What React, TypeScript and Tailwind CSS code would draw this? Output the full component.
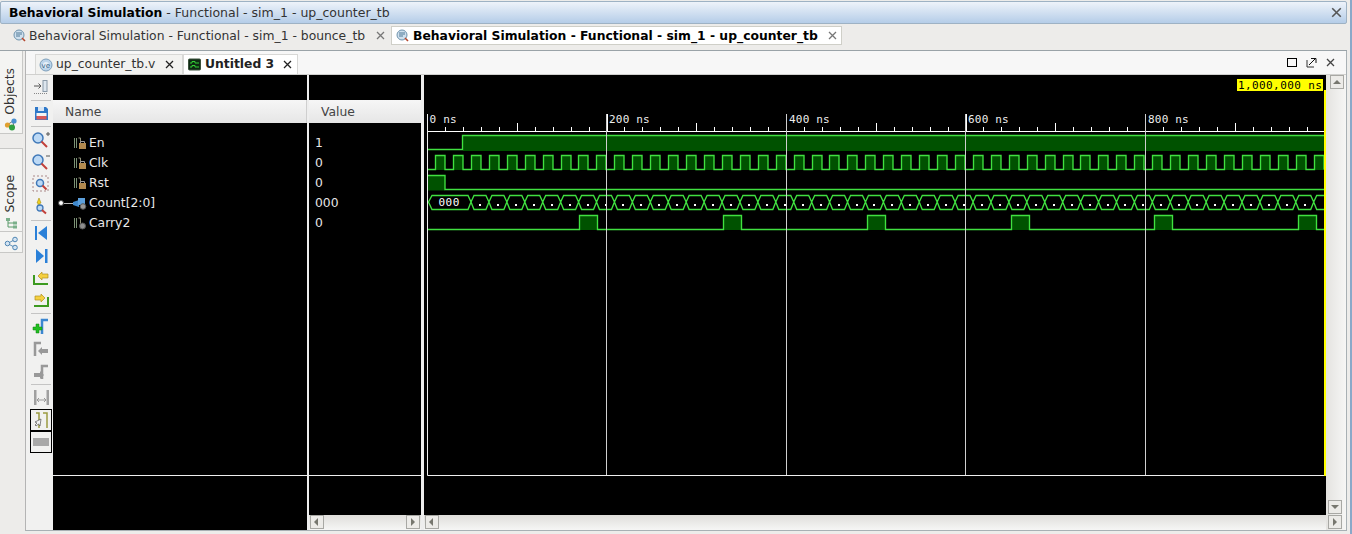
import React from "react";

const G = "#40e040";
const F = "#005200";
const W = 1.35;

function X({ c = "#444", s = 9 }: { c?: string; s?: number }) {
  return (
    <svg width={s} height={s} viewBox="0 0 9 9" className="shrink-0">
      <path d="M1 1L8 8M8 1L1 8" stroke={c} strokeWidth="1.3" fill="none" />
    </svg>
  );
}

function SimIcon() {
  return (
    <svg width="13" height="13" viewBox="0 0 13 13" className="shrink-0">
      <circle cx="6" cy="6" r="5" fill="#cfe0ee" stroke="#6f93ad" />
      <path d="M4 3v5M6 3v5M8 3v3" stroke="#4e7896" strokeWidth="1" />
      <path d="M9 9l3 3" stroke="#b5472f" strokeWidth="1.6" />
    </svg>
  );
}

function Lens({ children, cx = 7, cy = 7 }: { children?: React.ReactNode; cx?: number; cy?: number }) {
  return (
    <svg width="20" height="18" viewBox="0 0 20 18">
      {children}
      <circle cx={cx} cy={cy} r="5" fill="#bcd9f5" stroke="#3f78b8" strokeWidth="1.5" />
      <path d={`M${cx + 3.5} ${cy + 3.5}l5.500 5.500`} stroke="#c2403a" strokeWidth="2" />
    </svg>
  );
}

function ToolSep() {
  return <div className="h-px w-[20px] shrink-0 bg-[#c4c4c4] mx-auto" />;
}

function Tool({ children, h = 22, boxed }: { children: React.ReactNode; h?: number; boxed?: boolean }) {
  return (
    <div
      style={{ height: h }}
      className={`w-[22px] shrink-0 flex items-center justify-center ${boxed ? "border border-black" : ""}`}
    >
      {children}
    </div>
  );
}

function Toolbar() {
  return (
    <div className="w-[27px] shrink-0 flex flex-col items-start pl-[4px] pr-[1px]">
      <Tool h={24}>
        <svg width="16" height="16" viewBox="0 0 16 16">
          <path d="M1 7h7M5.500 4.500L8 7l-2.500 2.500" stroke="#555" strokeWidth="1" fill="none" />
          <rect x="10" y="1.500" width="4" height="11" fill="#dde6ee" stroke="#8a9aa8" />
          <path d="M1 14.500h13" stroke="#888" strokeDasharray="1 1" />
        </svg>
      </Tool>
      <div className="h-[1px]" />
      <ToolSep />
      <Tool h={25}>
        <svg width="15" height="15" viewBox="0 0 15 15">
          <path d="M1 1h11l2 2v11H1z" fill="#2f78c8" />
          <rect x="4" y="1" width="6" height="4" fill="#d8e6f4" />
          <rect x="2.500" y="7" width="10" height="3" fill="#f4f4f4" />
          <rect x="2.500" y="10" width="10" height="3.500" fill="#d85a5a" />
        </svg>
      </Tool>
      <ToolSep />
      <div className="h-[2px]" />
      <Tool>
        <Lens>
          <path d="M15 3h4M17 1v4" stroke="#555" strokeWidth="1" />
        </Lens>
      </Tool>
      <Tool>
        <Lens>
          <path d="M15 3h4" stroke="#555" strokeWidth="1" />
        </Lens>
      </Tool>
      <Tool>
        <svg width="18" height="18" viewBox="0 0 18 18">
          <rect x="1" y="1" width="15" height="15" fill="none" stroke="#a88" strokeDasharray="2 2" />
          <circle cx="8" cy="8" r="3.500" fill="#bcd9f5" stroke="#3f78b8" strokeWidth="1.500" />
          <path d="M10.500 10.500l4 4" stroke="#c2403a" strokeWidth="2" />
        </svg>
      </Tool>
      <Tool>
        <svg width="18" height="18" viewBox="0 0 18 18">
          <path d="M7 1l2 5H8v5H6V6H5z" fill="#f0d020" stroke="#a89010" strokeWidth=".6" />
          <circle cx="8" cy="11" r="3" fill="#bcd9f5" stroke="#3f78b8" strokeWidth="1.300" />
          <path d="M10 13l4 3.500" stroke="#c2403a" strokeWidth="2" />
        </svg>
      </Tool>
      <div className="h-[3px]" />
      <ToolSep />
      <Tool h={24}>
        <svg width="14" height="16" viewBox="0 0 14 16">
          <rect x="1" y="1" width="2" height="14" fill="#2a80d8" />
          <path d="M13 1v14L4 8z" fill="#2a80d8" />
        </svg>
      </Tool>
      <Tool h={22}>
        <svg width="14" height="16" viewBox="0 0 14 16">
          <rect x="11" y="1" width="2.500" height="14" fill="#2a80d8" />
          <path d="M2 1v14l8-7z" fill="#2a80d8" />
        </svg>
      </Tool>
      <Tool h={23}>
        <svg width="18" height="16" viewBox="0 0 18 16">
          <path d="M2 4v9h14" stroke="#3c9a20" strokeWidth="2" fill="none" />
          <path d="M6 5l4-4v2h6v4h-6v2z" fill="#f5d040" stroke="#b09020" strokeWidth=".7" />
        </svg>
      </Tool>
      <Tool h={22}>
        <svg width="18" height="16" viewBox="0 0 18 16">
          <path d="M16 4v9H2" stroke="#3c9a20" strokeWidth="2" fill="none" />
          <path d="M13 5L9 1v2H3v4h6v2z" fill="#f5d040" stroke="#b09020" strokeWidth=".7" />
        </svg>
      </Tool>
      <div className="h-[1px]" />
      <ToolSep />
      <Tool h={24}>
        <svg width="18" height="17" viewBox="0 0 18 17">
          <path d="M10 16V2h6" stroke="#3b86d0" strokeWidth="2.500" fill="none" />
          <path d="M4 6h3v3h3v3H7v3H4v-3H1V9h3z" fill="#20c020" stroke="#108010" strokeWidth=".5" />
        </svg>
      </Tool>
      <Tool h={22}>
        <svg width="16" height="16" viewBox="0 0 16 16">
          <path d="M2 15V2h6" stroke="#999" strokeWidth="2.500" fill="none" />
          <path d="M5 10l4-4v2h6v4H9v2z" fill="#999" />
        </svg>
      </Tool>
      <Tool h={24}>
        <svg width="16" height="16" viewBox="0 0 16 16">
          <path d="M9 15V2h6" stroke="#999" strokeWidth="2.500" fill="none" />
          <path d="M11 11L7 7v2H1v4h6v2z" fill="#999" />
        </svg>
      </Tool>
      <ToolSep />
      <Tool h={24}>
        <svg width="17" height="17" viewBox="0 0 17 17">
          <rect x="1" y="1" width="2.500" height="15" fill="#a0a0a0" />
          <rect x="13.500" y="1" width="2.500" height="15" fill="#a0a0a0" />
          <path d="M4 11h9M6 9l-2 2 2 2M11 9l2 2-2 2" stroke="#999" fill="none" />
        </svg>
      </Tool>
      <Tool h={22} boxed>
        <svg width="17" height="17" viewBox="0 0 17 17">
          <path d="M3 1h3v15M10 1h4v15" stroke="#9a9a40" strokeWidth="1.500" fill="none" />
          <path d="M8 7l-1 7-1.500-2L3 14l-1-1 2-2-2-1z" fill="#f4f4f4" stroke="#555" strokeWidth=".7" />
        </svg>
      </Tool>
      <Tool h={22} boxed>
        <div className="w-[16px] h-[8px] bg-[#a8a8a8]" />
      </Tool>
    </div>
  );
}

function SignalIcon({ kind }: { kind: "lock" | "gear" | "bus" }) {
  if (kind === "bus")
    return (
      <svg width="14" height="13" viewBox="0 0 14 13">
        <path d="M0 5l6-2v7l-6-2z" fill="#3f88cc" />
        <rect x="5" y="1" width="7" height="7" fill="#5c9fdc" />
        <circle cx="10" cy="9.500" r="2.800" fill="#999" stroke="#555" />
      </svg>
    );
  return (
    <svg width="14" height="13" viewBox="0 0 14 13">
      <path d="M1.500 1v10M3.500 1v10" stroke="#7d9276" strokeWidth="1" />
      <path d="M5.500 1h2v10" stroke="#94947a" strokeWidth="1" fill="none" />
      {kind === "lock" ? (
        <>
          <rect x="6" y="6" width="7" height="6" fill="#b28a50" />
          <path d="M7.500 6V4.500h4V6" stroke="#999" fill="none" />
        </>
      ) : (
        <circle cx="9.500" cy="9" r="3" fill="#8d8d8d" stroke="#555" />
      )}
    </svg>
  );
}

const signals: { name: string; value: string; kind: "lock" | "gear" | "bus" }[] = [
  { name: "En", value: "1", kind: "lock" },
  { name: "Clk", value: "0", kind: "lock" },
  { name: "Rst", value: "0", kind: "lock" },
  { name: "Count[2:0]", value: "000", kind: "bus" },
  { name: "Carry2", value: "0", kind: "gear" },
];

function ScrollBtn({ dir }: { dir: "l" | "r" | "u" | "d" }) {
  const d = { l: "M7 2v8L3 6z", r: "M4 2v8l4-4z", u: "M2 8h8L6 4z", d: "M2 4h8L6 8z" }[dir];
  return (
    <div className="w-[14px] h-[14px] shrink-0 border border-[#a8a8a4] bg-[#ecebe8] flex items-center justify-center">
      <svg width="12" height="12" viewBox="0 0 12 12">
        <path d={d} fill="#77776f" />
      </svg>
    </div>
  );
}

function HScroll({ right = true }: { right?: boolean }) {
  return (
    <div className="h-[15px] shrink-0 flex justify-between items-start bg-gradient-to-b from-[#dfdedb] to-[#f6f6f5] px-[1px]">
      <ScrollBtn dir="l" />
      {right && <ScrollBtn dir="r" />}
    </div>
  );
}

function Waves() {
  const gx = [606.5, 786.5, 965.5, 1145.5];
  const step = 17.93;
  let clk = "M428 169.500";
  const clkFill: React.ReactNode[] = [];
  for (let i = 0; i < 50; i++) {
    const r = Math.round(435 + i * step) + 0.5;
    const f = r + 9.5;
    if (r > 1325) break;
    const fe = Math.min(f, 1325.5);
    clk += `H${r}V155.500H${fe}` + (f < 1325 ? `V169.500` : "");
    clkFill.push(<rect key={i} x={r} y={155.5} width={fe - r} height={14.5} fill={F} />);
  }
  const dots: React.ReactNode[] = [];
  const hex: string[] = ["M471 202L468 195.500H432L428.500 202L432 209.500H468L471 202"];
  for (let i = 0; i < 48; i++) {
    const a = 471 + i * step;
    const b = a + step;
    if (a > 1325) break;
    const e = Math.min(b, 1325);
    const t = Math.min(b - 3, 1325);
    hex.push(`M${a} 202L${a + 3} 195.500H${t}L${e} 202L${t} 209.500H${a + 3}Z`);
    if (a + 9 < 1322) dots.push(<rect key={i} x={Math.round(a + 8)} y={204} width={2} height={2} fill="#fff" />);
  }
  const pulses = [579.5, 723.5, 867.5, 1011.5, 1154.5, 1298.5];
  let carry = "M428 229.500";
  pulses.forEach((p) => {
    carry += `H${p}V215.500H${p + 18}V229.500`;
  });
  carry += "H1325";

  const ticks: React.ReactNode[] = [];
  for (let i = 0; i <= 50; i++) {
    const x = Math.round(427 + i * 17.95) + 0.5;
    if (x > 1325) break;
    const y1 = i % 10 === 0 ? 114 : i % 5 === 0 ? 123 : 127;
    ticks.push(<path key={i} d={`M${x} ${y1}V131`} stroke="#fff" strokeWidth="1" />);
  }
  const labels = ["0 ns", "200 ns", "400 ns", "600 ns", "800 ns"];
  const mono = { fontFamily: "'DejaVu Sans Mono', monospace", fontSize: 11 };
  return (
    <svg width="902" height="440" viewBox="424 75 902 440" className="block">
      <rect x="424" y="75" width="902" height="440" fill="#000" />
      {labels.map((l, i) => (
        <text key={l} x={[429.5, 609, 789, 968, 1148][i]} y={123} fill="#eee" style={mono} letterSpacing="0.2">
          {l}
        </text>
      ))}
      {ticks}
      <path d="M427.500 131.500H1325" stroke="#fff" />
      <rect x="463" y="135.500" width="863" height="15.500" fill={F} />
      <path d="M428 149.500H462.500V135.500H1325" stroke={G} strokeWidth={W} fill="none" />
      {clkFill}
      <path d={clk} stroke={G} strokeWidth={W} fill="none" />
      <rect x="428" y="175.500" width="17" height="15" fill={F} />
      <path d="M428 175.500H445V189.500H1325" stroke={G} strokeWidth={W} fill="none" />
      <path d={hex.join("")} stroke={G} strokeWidth={W} fill="none" />
      <text x="438.500" y="206" fill="#fff" style={mono} letterSpacing="0.5">
        000
      </text>
      {dots}
      {pulses.map((p) => (
        <rect key={p} x={p} y={215.5} width={18} height={14.5} fill={F} />
      ))}
      <path d={carry} stroke={G} strokeWidth={W} fill="none" />
      {gx.map((x) => (
        <path key={x} d={`M${x} 114V475`} stroke="#cfcfcf" />
      ))}
      <path d="M427.500 114V475.500H1325" stroke="#eee" fill="none" />
      <rect x="1237" y="79" width="86" height="12" fill="#ffff00" />
      <text x="1238" y="89" fill="#000" style={mono} letterSpacing="0.4">
        1,000,000 ns
      </text>
      <rect x="1324" y="90" width="2" height="386" fill="#ffff00" />
    </svg>
  );
}

export default function App() {
  return (
    <div
      className="w-[1352px] h-[534px] overflow-hidden flex flex-col bg-[#edecea] text-[12.35px] text-[#333] border-r-2 border-[#8aa8c8]"
      style={{ fontFamily: "'DejaVu Sans', sans-serif" }}
    >
      {/* title bar */}
      <div className="h-[23px] mt-[1px] mr-[3px] shrink-0 flex items-center justify-between pl-[8px] pr-[4px] border border-[#9eb2c4] rounded-[2px] bg-gradient-to-b from-[#eef3fa] to-[#b5cde8]">
        <div className="whitespace-nowrap pt-[1px]">
          <span className="font-bold text-black">Behavioral Simulation</span>
          <span className="text-[#333] text-[12.5px]"> - Functional - sim_1 - up_counter_tb</span>
        </div>
        <X c="#555" s={11} />
      </div>
      {/* sim tabs */}
      <div className="h-[27px] shrink-0 mr-[3px] flex items-start pt-[2px] pl-[13px] border-b border-[#9aa3a8]">
        <div className="h-[19px] flex items-center gap-[3px] w-[378px] whitespace-nowrap text-[#333]">
          <SimIcon />
          <span className="pt-[1px]">Behavioral Simulation - Functional - sim_1 - bounce_tb</span>
          <span className="ml-[8px]">
            <X c="#777" />
          </span>
        </div>
        <div className="h-[19px] flex items-center gap-[4px] pl-[4px] pr-[4px] bg-white border border-[#cfcfc8] whitespace-nowrap font-bold text-black">
          <SimIcon />
          <span className="pt-[1px]">Behavioral Simulation - Functional - sim_1 - up_counter_tb</span>
          <span className="ml-[6px]">
            <X c="#777" />
          </span>
        </div>
      </div>
      {/* main */}
      <div className="flex-1 flex min-h-0 mb-[3px]">
        {/* side tabs */}
        <div className="w-[24px] shrink-0 flex flex-col items-start">
          <div className="h-[83px] w-[23px] flex flex-col items-center bg-[#f4f4f2] border border-l-0 border-t-0 border-[#c8c8c6]">
            <span className="[writing-mode:vertical-rl] rotate-180 mt-[17px] mr-[3px] leading-[20px] text-[#333]">Objects</span>
            <svg width="14" height="14" viewBox="0 0 14 14" className="mt-[2px]">
              <path d="M3 8L9 4M3 8l7 3M9 4l1 7" stroke="#777" />
              <circle cx="3.500" cy="8" r="2.600" fill="#e0a030" />
              <circle cx="10" cy="4" r="2.600" fill="#4a90d0" />
              <circle cx="8" cy="10.500" r="3" fill="#30a040" />
            </svg>
          </div>
          <div className="h-[14px]" />
          <div className="h-[105px] w-[23px] flex flex-col items-center bg-[#f4f4f2] border border-l-0 border-[#c8c8c6]">
            <span className="[writing-mode:vertical-rl] rotate-180 mt-[26px] mr-[3px] leading-[20px] text-[#333]">Scope</span>
            <svg width="14" height="14" viewBox="0 0 14 14" className="mt-[3px]">
              <path d="M4 4v7M4 7h5M4 11h5" stroke="#5a9a6a" fill="none" />
              <rect x="2" y="2" width="4" height="3" fill="#7ab08a" />
              <rect x="9" y="5.500" width="4" height="3" fill="#7ab08a" />
              <rect x="9" y="9.500" width="4" height="3" fill="#7ab08a" />
            </svg>
            <div className="h-px w-full bg-[#c8c8c6] mt-[1px]" />
            <svg width="15" height="15" viewBox="0 0 15 15" className="mt-[4px]">
              <path d="M3.500 7.500L11 3.500M3.500 7.500L11 11.500" stroke="#5c8fb8" />
              <circle cx="3.500" cy="7.500" r="2.300" fill="#d4e4f2" stroke="#4f86b4" />
              <circle cx="11" cy="3.500" r="2.300" fill="#d4e4f2" stroke="#4f86b4" />
              <circle cx="11" cy="11.500" r="2.300" fill="#d4e4f2" stroke="#4f86b4" />
            </svg>
          </div>
        </div>
        <div className="w-[1px] shrink-0" />
        {/* panel */}
        <div className="flex-1 min-w-0 flex flex-col mr-[3px] border-r border-b border-[#a8b0b4] border-l border-l-[#b4b4b4] bg-[#f1f1f0]">
          {/* doc tabs */}
          <div className="h-[24px] shrink-0 flex items-end pl-[9px] bg-[#f7f7f7] border-b border-[#d0d0ce]">
            <div className="h-[20px] w-[148px] flex items-center gap-[3px] pl-[3px] bg-[#f2f2f0] border border-b-0 border-[#d8d8d6] whitespace-nowrap">
              <svg width="14" height="14" viewBox="0 0 14 14">
                <circle cx="7" cy="7" r="6" fill="#bcd4ea" stroke="#7d9fbb" />
                <circle cx="7" cy="7" r="3" fill="#e6f0f8" />
                <text x="2.500" y="9.500" fontSize="7" fill="#335f85" fontFamily="'DejaVu Sans'">ve</text>
              </svg>
              <span>up_counter_tb.v</span>
              <span className="ml-[7px]">
                <X c="#222" />
              </span>
            </div>
            <div className="h-[20px] flex items-center gap-[4px] pl-[4px] pr-[5px] bg-white border border-b-0 border-[#d8d8d6] whitespace-nowrap font-bold text-[#222]">
              <svg width="13" height="13" viewBox="0 0 13 13">
                <rect x="0.500" y="1" width="12" height="11" rx="1" fill="#0d2a12" stroke="#3a503a" />
                <path d="M2 5h2V3.500h3V5h4M2 9h2V7.500h3V9h4" stroke="#34d034" fill="none" />
              </svg>
              <span>Untitled 3</span>
              <span className="ml-[5px]">
                <X c="#222" />
              </span>
            </div>
            <div className="ml-auto self-center flex items-center gap-[9px] pr-[11px]">
              <div className="w-[10px] h-[9px] border border-black" />
              <svg width="11" height="11" viewBox="0 0 11 11">
                <path d="M1 3v7h7" stroke="#333" fill="none" />
                <path d="M3 8l6-6M5 1.500h5V6" stroke="#111" fill="none" />
              </svg>
              <X c="#444" />
            </div>
          </div>
          {/* content */}
          <div className="flex-1 min-h-0 flex">
            <Toolbar />
            <div className="flex flex-col w-[254px] shrink-0 bg-black">
              <div className="h-[25px] shrink-0" />
              <div className="h-[23px] shrink-0 flex items-center pl-[12px] pt-[1px] text-[#444] bg-gradient-to-b from-[#f6f6f6] to-[#e6e6e6] border-r border-[#cfcfcf]">
                Name
              </div>
              <div className="flex-1 pt-[10px] text-[#e8e8e8]">
                {signals.map((s) => (
                  <div key={s.name} className="h-[20px] flex items-center">
                    <div className="w-[20px] shrink-0 flex items-center h-full pl-[5px]">
                      {s.kind === "bus" && <div className="w-[6px] h-[6px] shrink-0 rounded-full bg-white border border-[#444]" />}
                      {s.kind === "bus" && <div className="h-px w-[9px] shrink-0 bg-[#bbb]" />}
                    </div>
                    <div className="w-[16px] shrink-0 flex">
                      <SignalIcon kind={s.kind} />
                    </div>
                    <span>{s.name}</span>
                  </div>
                ))}
              </div>
              <div className="h-[55px] shrink-0 border-t border-[#eee]" />
            </div>
            <div className="w-[2px] shrink-0 bg-[#eee]" />
            <div className="flex flex-col w-[112px] shrink-0 bg-black">
              <div className="h-[25px] shrink-0" />
              <div className="h-[23px] shrink-0 flex items-center pl-[12px] pt-[1px] text-[#444] bg-gradient-to-b from-[#f6f6f6] to-[#e6e6e6]">
                Value
              </div>
              <div className="flex-1 pt-[10px] text-[#e8e8e8] pl-[6px]">
                {signals.map((s) => (
                  <div key={s.name} className="h-[20px] flex items-center">
                    {s.value}
                  </div>
                ))}
              </div>
              <div className="h-[40px] shrink-0 border-t border-[#eee]" />
              <HScroll />
            </div>
            <div className="w-[3px] shrink-0 bg-[#eee]" />
            <div className="flex flex-col w-[902px] shrink-0">
              <Waves />
              <HScroll right={false} />
            </div>
            <div className="flex-1 flex flex-col justify-between items-start pl-[2px] bg-gradient-to-r from-[#e4e3e0] to-[#f6f6f5]">
              <div className="ml-[2px]">
                <ScrollBtn dir="u" />
              </div>
              <div className="flex flex-col mb-[1px]">
                <ScrollBtn dir="d" />
                <div className="h-px" />
                <ScrollBtn dir="r" />
              </div>
            </div>
          </div>
        </div>
      </div>
    </div>
  );
}
